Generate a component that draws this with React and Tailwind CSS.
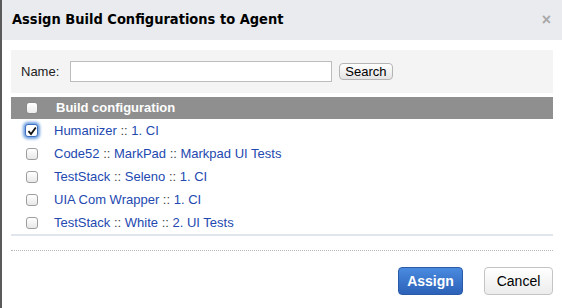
export default function App() {
  const rows = [
    { parts: ["Humanizer", "1. CI"], checked: true },
    { parts: ["Code52", "MarkPad", "Markpad UI Tests"] },
    { parts: ["TestStack", "Seleno", "1. CI"] },
    { parts: ["UIA Com Wrapper", "1. CI"] },
    { parts: ["TestStack", "White", "2. UI Tests"] },
  ]

  return (
    <div className="w-[562px] h-[308px] bg-white border-l-2 border-[#5a5a5a] overflow-hidden text-[13px] text-[#222]" style={{ fontFamily: '"Liberation Sans", Arial, sans-serif' }}>
      <div className="h-[40px] bg-[#e9ebef] flex items-center justify-between pl-[10px] pr-[11px]">
        <h1 className="text-[14.5px] font-bold text-black" style={{ fontFamily: '"DejaVu Sans Condensed", "DejaVu Sans", sans-serif' }}>
          Assign Build Configurations to Agent
        </h1>
        <span className="text-[#a8a8a8] text-[16px] font-bold leading-none">×</span>
      </div>

      <div className="px-[9px] pt-[10px]">
        <div className="h-[43px] bg-[#f4f4f4] flex items-center pl-[10px]">
          <label className="mr-[11px]">Name:</label>
          <input type="text" className="w-[262px] h-[21px] bg-white border border-[#bcbcbc] outline-none" />
          <button className="ml-[7px] h-[17px] px-[5px] text-[13px] leading-none rounded-[4px] border border-[#b5b5b5] bg-gradient-to-b from-white to-[#e4e4e4] text-black">
            Search
          </button>
        </div>

        <div className="mt-[4px] h-[22px] bg-[#8f8f8f] flex items-center pl-[15px]">
          <span className="w-[12px] h-[12px] rounded-[3px] border border-[#8a8a8a] bg-gradient-to-b from-white to-[#ececec]" />
          <span className="ml-[18px] font-bold text-white">Build configuration</span>
        </div>

        <div className="border-b-2 border-[#e1e6ee]">
          {rows.map((r, i) => (
            <div key={i} className="h-[23px] flex items-center pl-[13px]">
              <span className="w-[15px] h-[15px] flex items-center justify-center">
                {r.checked ? (
                  <span className="w-[13px] h-[13px] rounded-[3px] border border-[#3f6fc0] bg-white shadow-[0_0_3px_2px_#6d9fe0] flex items-center justify-center">
                    <svg width="10" height="10" viewBox="0 0 10 10">
                      <path d="M1.5 5.2 L4 8 L8.8 1.5" fill="none" stroke="#111" strokeWidth="1.8" />
                    </svg>
                  </span>
                ) : (
                  <span className="w-[12px] h-[12px] rounded-[3px] border border-[#9d9d9d] bg-gradient-to-b from-white to-[#e8e8e8]" />
                )}
              </span>
              <span className="ml-[15px] text-[#2349b0]">
                {r.parts.map((p, j) => (
                  <span key={j}>
                    {j > 0 && <span className="text-[#444]"> :: </span>}
                    {p}
                  </span>
                ))}
              </span>
            </div>
          ))}
        </div>

        <div className="mt-[14px] border-t border-dotted border-[#b8b8b8]" />

        <div className="flex justify-end gap-[21px] mt-[16px]">
          <button className="w-[65px] h-[28px] rounded-[4px] border border-[#2a5aa8] bg-gradient-to-b from-[#4a8be0] to-[#2c62b8] text-white font-bold text-[14px]">
            Assign
          </button>
          <button className="w-[69px] h-[28px] rounded-[4px] border border-[#c4c4c4] bg-gradient-to-b from-white to-[#ececec] text-black text-[14px]">
            Cancel
          </button>
        </div>
      </div>
    </div>
  )
}
